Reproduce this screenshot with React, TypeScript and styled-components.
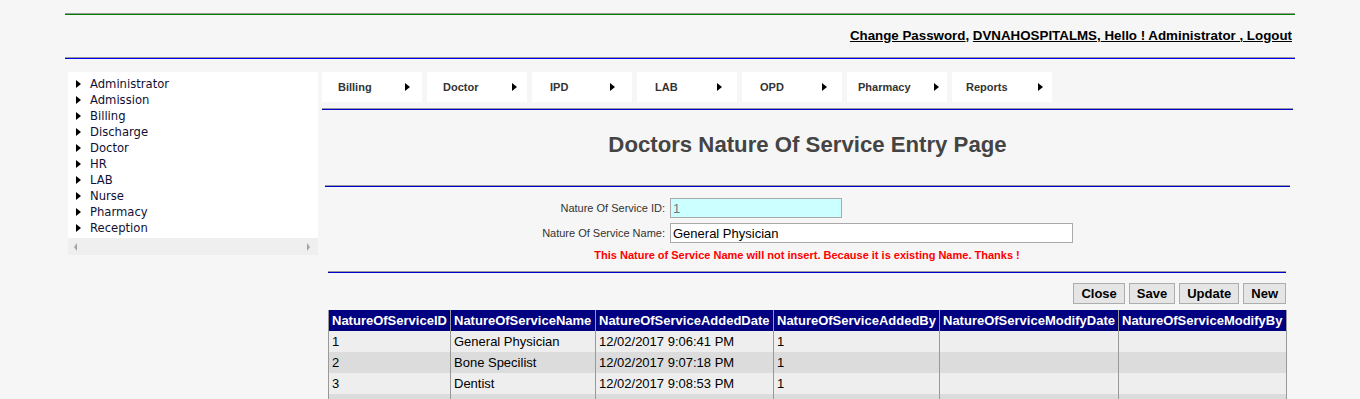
import React from "react";
import styled, { createGlobalStyle } from "styled-components";

const GlobalStyle = createGlobalStyle`
	body {
		margin: 0;
		background: #f6f6f6;
		font-family: "Liberation Sans", Arial, sans-serif;
	}
`;

const sideItems = [
	"Administrator",
	"Admission",
	"Billing",
	"Discharge",
	"Doctor",
	"HR",
	"LAB",
	"Nurse",
	"Pharmacy",
	"Reception",
];

const menuItems = [
	{ label: "Billing", pad: 16, arrow: 83 },
	{ label: "Doctor", pad: 16, arrow: 85 },
	{ label: "IPD", pad: 18, arrow: 78 },
	{ label: "LAB", pad: 18, arrow: 80 },
	{ label: "OPD", pad: 18, arrow: 80 },
	{ label: "Pharmacy", pad: 11, arrow: 87 },
	{ label: "Reports", pad: 14, arrow: 86 },
];

const columns = [
	{ title: "NatureOfServiceID", width: 122 },
	{ title: "NatureOfServiceName", width: 145 },
	{ title: "NatureOfServiceAddedDate", width: 178 },
	{ title: "NatureOfServiceAddedBy", width: 166 },
	{ title: "NatureOfServiceModifyDate", width: 179 },
	{ title: "NatureOfServiceModifyBy", width: 168 },
];

const rows = [
	["1", "General Physician", "12/02/2017 9:06:41 PM", "1", "", ""],
	["2", "Bone Specilist", "12/02/2017 9:07:18 PM", "1", "", ""],
	["3", "Dentist", "12/02/2017 9:08:53 PM", "1", "", ""],
	["", "", "", "", "", ""],
];

const App = () => {
	return (
		<>
			<GlobalStyle />
			<Page>
				<Rule $color='#008000' />
				<Header>
					<HeadLink>Change Password</HeadLink>,&nbsp;
					<HeadLink>DVNAHOSPITALMS</HeadLink>,
					<HeadLink>&nbsp;Hello ! Administrator , Logout</HeadLink>
				</Header>
				<Rule $color='#0000ee' />
				<Body>
					<Sidebar>
						<SideList>
							{sideItems.map((item) => (
								<SideItem key={item}>
									<Arrow $w={5} $h={8} />
									<span>{item}</span>
								</SideItem>
							))}
						</SideList>
						<ScrollTrack>
							<ScrollArrow $dir='left' />
							<ScrollArrow $dir='right' />
						</ScrollTrack>
					</Sidebar>
					<Content>
						<Menu>
							{menuItems.map((item) => (
								<MenuItem key={item.label} $pad={item.pad}>
									<MenuLabel $arrow={item.arrow - item.pad}>{item.label}</MenuLabel>
									<Arrow $w={5} $h={9} />
								</MenuItem>
							))}
						</Menu>
						<Rule $color='#0000cc' $top={6} />
						<Panel>
							<Title>Doctors Nature Of Service Entry Page</Title>
							<Rule $color='#0000cc' />
							<FormArea>
								<FieldRow>
									<Label>Nature Of Service ID:</Label>
									<Input $w={172} $bg='#ccffff' $fg='#777' value='1' readOnly />
								</FieldRow>
								<FieldRow>
									<Label>Nature Of Service Name:</Label>
									<Input $w={403} $bg='#fff' $fg='#000' value='General Physician' readOnly />
								</FieldRow>
								<ErrorText>
									This Nature of Service Name will not insert. Because it is existing Name. Thanks !
								</ErrorText>
								<Rule $color='#0000cc' $top={9} />
								<Buttons>
									<Button>Close</Button>
									<Button>Save</Button>
									<Button>Update</Button>
									<Button>New</Button>
								</Buttons>
								<Grid>
									<colgroup>
										{columns.map((c) => (
											<col key={c.title} style={{ width: c.width }} />
										))}
									</colgroup>
									<thead>
										<tr>
											{columns.map((c) => (
												<HeadCell key={c.title}>{c.title}</HeadCell>
											))}
										</tr>
									</thead>
									<tbody>
										{rows.map((r, i) => (
											<Row key={i} $alt={i % 2 === 1}>
												{r.map((v, j) => (
													<Cell key={j}>{v}</Cell>
												))}
											</Row>
										))}
									</tbody>
								</Grid>
							</FormArea>
						</Panel>
					</Content>
				</Body>
			</Page>
		</>
	);
};

export default App;

const Page = styled.div`
	width: 1230px;
	margin: 0 auto;
	padding-top: 13px;
`;

const Rule = styled.div<{ $color: string; $top?: number }>`
	height: 0;
	margin-top: ${(p) => p.$top || 0}px;
	border-top: 1px solid #999;
	border-bottom: 1px solid ${(p) => p.$color};
`;

const Header = styled.div`
	height: 40px;
	padding: 0 3px 2px 0;
	display: flex;
	align-items: center;
	justify-content: flex-end;
	font-size: 13.33px;
	font-weight: bold;
	color: #000;
	white-space: pre;
`;

const HeadLink = styled.a`
	color: #000;
	text-decoration: underline;
	cursor: pointer;
`;

const Body = styled.div`
	display: flex;
	align-items: flex-start;
	margin-top: 13px;
	padding-left: 3px;
	gap: 4px;
`;

const Sidebar = styled.div`
	flex: 0 0 250px;
	background: #fff;
`;

const SideList = styled.div`
	padding: 4px 0 2px 8px;
`;

const SideItem = styled.div`
	display: flex;
	align-items: center;
	height: 16px;
	font-family: "DejaVu Sans", Verdana, sans-serif;
	font-size: 11.6px;
	color: #101035;
	gap: 9px;
`;

const Arrow = styled.i<{ $w: number; $h: number }>`
	display: inline-block;
	flex-shrink: 0;
	width: 0;
	height: 0;
	border-left: ${(p) => p.$w}px solid #000;
	border-top: ${(p) => p.$h / 2}px solid transparent;
	border-bottom: ${(p) => p.$h / 2}px solid transparent;
`;

const ScrollTrack = styled.div`
	height: 17px;
	background: #efefef;
	display: flex;
	align-items: center;
	justify-content: space-between;
	padding: 0 8px 0 6px;
`;

const ScrollArrow = styled.i<{ $dir: "left" | "right" }>`
	width: 0;
	height: 0;
	border-top: 4px solid transparent;
	border-bottom: 4px solid transparent;
	${(p) =>
		p.$dir === "left"
			? "border-right: 3px solid #a3a3a3;"
			: "border-left: 3px solid #a3a3a3;"}
`;

const Content = styled.div`
	flex: 1;
	min-width: 0;
	margin-right: 2px;
`;

const Menu = styled.div`
	display: flex;
	gap: 5px;
`;

const MenuItem = styled.div<{ $pad: number }>`
	width: 100px;
	height: 30px;
	box-sizing: border-box;
	background: #fff;
	display: flex;
	align-items: center;
	padding-left: ${(p) => p.$pad}px;
	font-size: 11px;
	font-weight: bold;
	color: #333;
`;

const MenuLabel = styled.span<{ $arrow: number }>`
	width: ${(p) => p.$arrow}px;
	white-space: nowrap;
`;

const Panel = styled.div`
	margin: 0 3px;
`;

const Title = styled.h1`
	margin: 23px 0 28px;
	line-height: 24px;
	text-align: center;
	font-size: 22.2px;
	font-weight: bold;
	color: #444;
`;

const FormArea = styled.div`
	margin: 0 4px 0 3px;
	padding-top: 11px;
`;

const FieldRow = styled.div`
	display: flex;
	align-items: center;
	gap: 5px;
	margin-bottom: 5px;
`;

const Label = styled.label`
	width: 337px;
	text-align: right;
	font-size: 11px;
	color: #333;
`;

const Input = styled.input<{ $w: number; $bg: string; $fg: string }>`
	width: ${(p) => p.$w}px;
	height: 20px;
	box-sizing: border-box;
	margin: 0;
	padding: 0 2px;
	border: 1px solid #a9a9a9;
	background: ${(p) => p.$bg};
	color: ${(p) => p.$fg};
	font-family: "Liberation Sans", Arial, sans-serif;
	font-size: 13px;
	outline: none;
`;

const ErrorText = styled.div`
	margin-top: 1px;
	line-height: 14px;
	text-align: center;
	font-size: 11px;
	font-weight: bold;
	color: #ff0000;
`;

const Buttons = styled.div`
	display: flex;
	justify-content: flex-end;
	gap: 4px;
	margin-top: 10px;
`;

const Button = styled.button`
	height: 21px;
	padding: 0 7px;
	border: 1px solid #adadad;
	background: #e5e5e5;
	font-family: "Liberation Sans", Arial, sans-serif;
	font-size: 13px;
	font-weight: bold;
	color: #000;
`;

const Grid = styled.table`
	width: 958px;
	margin-top: 6px;
	border-collapse: collapse;
	table-layout: fixed;
	font-size: 13px;
`;

const HeadCell = styled.th`
	height: 21px;
	padding: 0 3px;
	background: #000080;
	color: #fff;
	text-align: left;
	font-weight: bold;
	white-space: nowrap;
	overflow: hidden;
	border-left: 1px solid #999;
	border-right: 1px solid #999;
`;

const Row = styled.tr<{ $alt: boolean }>`
	background: ${(p) => (p.$alt ? "#dcdcdc" : "#eeeeee")};
`;

const Cell = styled.td`
	height: 21px;
	padding: 0 3px;
	color: #000;
	white-space: nowrap;
	border-left: 1px solid #999;
	border-right: 1px solid #999;
`;
